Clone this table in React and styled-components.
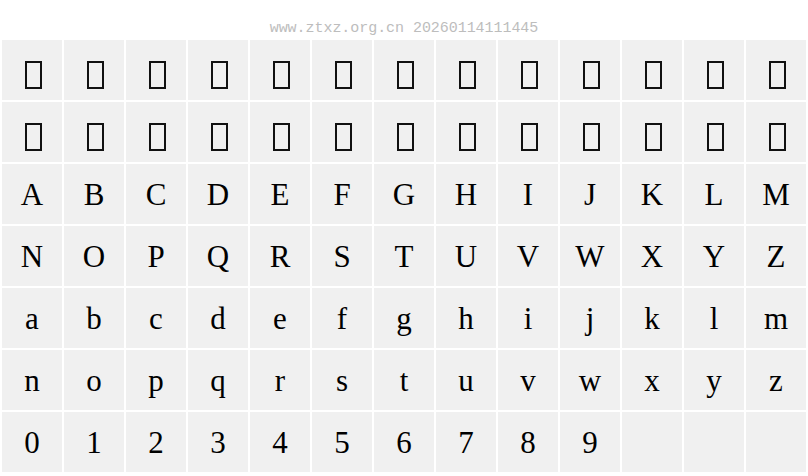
import React from "react"
import styled, { createGlobalStyle } from "styled-components"

const upper = "ABCDEFGHIJKLMNOPQRSTUVWXYZ".split("")
const lower = "abcdefghijklmnopqrstuvwxyz".split("")
const digits = "0123456789".split("")

// 两行缺字方块 + 字母 + 数字，最后补空格
const cells = [
  ...Array(26).fill(null).map(() => ({ tofu: true })),
  ...upper.map(c => ({ ch: c })),
  ...lower.map(c => ({ ch: c })),
  ...digits.map(c => ({ ch: c })),
  ...Array(3).fill(null).map(() => ({ ch: "" })),
]

const App = () => {
  return (
    <Page>
      <GlobalStyle />
      <Header>www.ztxz.org.cn 20260114111445</Header>
      <Grid>
        {cells.map((cell, i) => (
          <Cell key={i}>{cell.tofu ? <Tofu /> : cell.ch}</Cell>
        ))}
      </Grid>
    </Page>
  )
}

const GlobalStyle = createGlobalStyle`
  html, body {
    margin: 0;
    padding: 0;
    background: #ffffff;
  }
`

const Page = styled.div`
  width: 808px;
  height: 476px;
  overflow: hidden;
`

const Header = styled.div`
  height: 40px;
  display: flex;
  align-items: center;
  justify-content: center;
  padding-top: 16px;
  box-sizing: border-box;
  font-family: "Liberation Mono", "DejaVu Sans Mono", monospace;
  font-size: 15px;
  color: #bdbdbd;
  letter-spacing: -0.05px;
`

const Grid = styled.div`
  display: grid;
  grid-template-columns: repeat(13, 60px);
  grid-auto-rows: 60px;
  gap: 2px;
  padding: 0 2px;
`

const Cell = styled.div`
  background: #f0f0f0;
  display: flex;
  align-items: center;
  justify-content: center;
  font-family: "Liberation Serif", "DejaVu Serif", serif;
  font-size: 31px;
  line-height: 1;
  color: #000000;
`

const Tofu = styled.span`
  display: block;
  width: 17px;
  height: 28px;
  box-sizing: border-box;
  border: 2px solid #111111;
  margin-top: 10px;
  margin-left: 3px;
`

export default App
